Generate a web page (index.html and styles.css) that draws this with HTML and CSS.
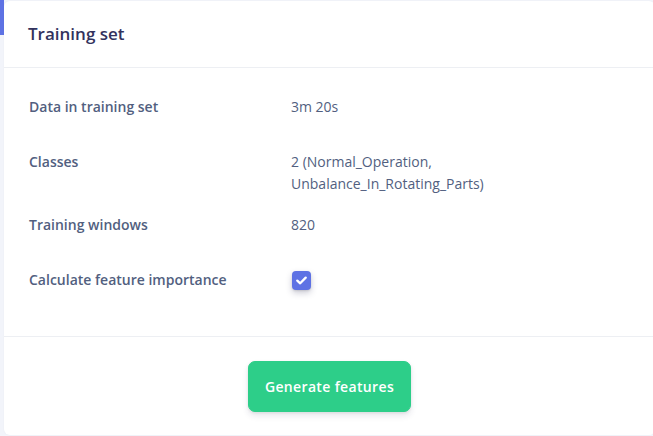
FILE: index.html
```html
<!DOCTYPE html>
<html>
<head>
<meta charset="utf-8">
<link rel="stylesheet" href="styles.css">
</head>
<body>
<div class="card">
  <div class="card-header">
    <h3 class="title">Training set</h3>
  </div>
  <div class="card-body">
    <div class="row">
      <div class="label">Data in training set</div>
      <div class="value">3m 20s</div>
    </div>
    <div class="row">
      <div class="label">Classes</div>
      <div class="value">2 (Normal_Operation,<br>Unbalance_In_Rotating_Parts)</div>
    </div>
    <div class="row">
      <div class="label">Training windows</div>
      <div class="value">820</div>
    </div>
    <div class="row">
      <div class="label">Calculate feature importance</div>
      <div class="value">
        <span class="checkbox">
          <svg width="11" height="9" viewBox="0 0 11 9"><path d="M1.3 4.6 L4.2 7.3 L9.7 1.6" fill="none" stroke="#fff" stroke-width="2.3" stroke-linecap="round" stroke-linejoin="round"/></svg>
        </span>
      </div>
    </div>
  </div>
  <div class="card-footer">
    <button class="btn">Generate features</button>
  </div>
</div>
</body>
</html>
```

FILE: styles.css
```css
html, body {
  margin: 0;
  padding: 0;
  overflow: hidden;
}
body {
  width: 653px;
  height: 436px;
  background: linear-gradient(#5e72e4, #5e72e4) 0 0 / 4px 35px no-repeat, #f2f4fa;
  font-family: "Open Sans", "Liberation Sans", sans-serif;
  padding-top: 1px;
  box-sizing: border-box;
}
.card {
  margin-left: 4px;
  width: 651px;
  background: #fff;
  border-radius: 6px;
  box-shadow: 0 0 2px rgba(0, 0, 0, 0.04);
}
.card-header {
  padding: 20px 24px;
  border-bottom: 1px solid #edeff3;
}
.title {
  margin: 0;
  font-size: 17px;
  font-weight: 600;
  line-height: 25.5px;
  color: #32325d;
}
.card-body {
  padding: 28px 24px 31px;
}
.row {
  display: grid;
  grid-template-columns: 263px 1fr;
  min-height: 36px;
  margin-bottom: 19px;
  font-size: 14px;
  line-height: 22px;
  color: #525f7f;
}
.row:last-child {
  margin-bottom: 0;
}
.label {
  font-weight: 600;
  padding-left: 1px;
}
.value {
  font-weight: 400;
}
.checkbox {
  display: inline-flex;
  align-items: center;
  justify-content: center;
  width: 19px;
  height: 19px;
  margin-top: 1px;
  margin-left: 1px;
  border-radius: 4px;
  background: #5e72e4;
  box-shadow: 0 3px 6px rgba(50, 50, 93, 0.25), 0 1px 2px rgba(0, 0, 0, 0.1);
}
.card-footer {
  border-top: 1px solid #edeff3;
  padding: 24px 24px 23px;
  display: flex;
  justify-content: center;
}
.btn {
  font-family: "Open Sans", "Liberation Sans", sans-serif;
  font-size: 14px;
  font-weight: 600;
  line-height: 21px;
  letter-spacing: 0.025em;
  color: #fff;
  background: #2dce89;
  border: 1px solid #2dce89;
  border-radius: 7px;
  padding: 14px 16px;
  box-shadow: 0 4px 6px rgba(50, 50, 93, 0.11), 0 1px 3px rgba(0, 0, 0, 0.08);
}
```
